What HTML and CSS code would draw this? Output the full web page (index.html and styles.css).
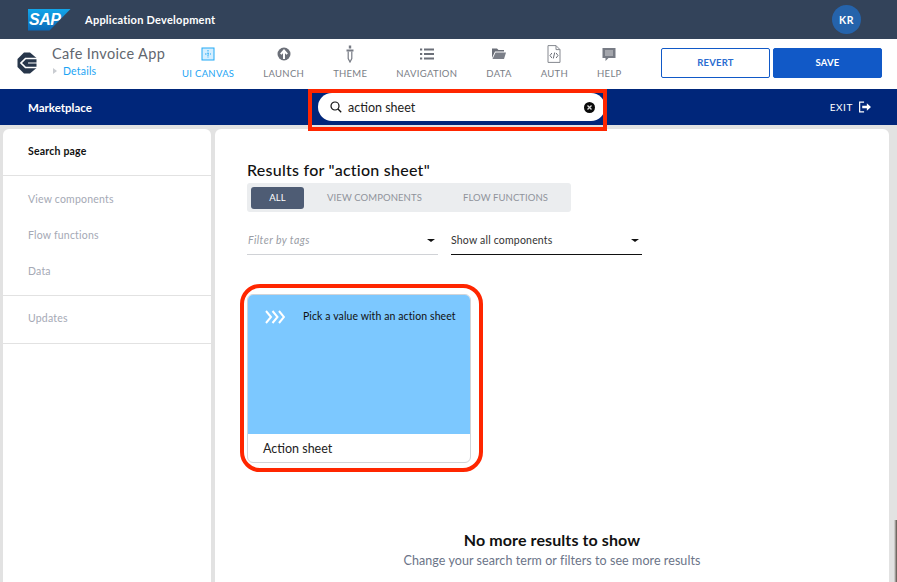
FILE: index.html
```html
<!DOCTYPE html>
<html lang="en">
<head>
<meta charset="utf-8">
<title>Marketplace</title>
<link rel="stylesheet" href="styles.css">
</head>
<body>
<div class="app">
  <header class="topbar">
    <div class="sap-logo"><span>SAP</span></div>
    <div class="topbar-title">Application Development</div>
    <div class="avatar">KR</div>
  </header>

  <div class="toolbar">
    <svg class="app-logo" viewBox="0 0 20 22" aria-hidden="true">
      <path d="M7 .5h6l6.500 5.500v10L13 21.500H7L.5 15V7z" fill="#27364a"/>
      <path d="M20 6.500H8.500L4 11l4.500 4.500H20" fill="none" stroke="#fff" stroke-width="1.700"/>
      <path d="M11 11h9" stroke="#fff" stroke-width="1"/>
    </svg>
    <div class="app-name">
      <div class="app-title">Cafe Invoice App</div>
      <div class="app-details"><i class="tri"></i>Details</div>
    </div>
    <nav class="nav">
      <div class="nav-item active">
        <svg class="nav-icon" viewBox="0 0 14 18" aria-hidden="true"><rect x="1" y="3" width="12" height="12" fill="#d4eeff" stroke="#22a9f5"/><path d="M7 5v8M4 9h6" stroke="#22a9f5" stroke-dasharray="1.500 1"/></svg>
        <span>UI CANVAS</span>
      </div>
      <div class="nav-item">
        <svg class="nav-icon" viewBox="0 0 14 18" aria-hidden="true"><circle cx="7" cy="9" r="6.500" fill="#6b6f78"/><path d="M7 14V7M3.800 9.200 7 5.600l3.200 3.600" fill="none" stroke="#fff" stroke-width="2"/></svg>
        <span>LAUNCH</span>
      </div>
      <div class="nav-item">
        <svg class="nav-icon" viewBox="0 0 14 18" aria-hidden="true"><path d="M7 0.500v3" stroke="#777b84" stroke-width="2.400"/><path d="M3.500 4.500h7v2h-7z" fill="#777b84"/><path d="M5.200 6.500v7L7 17l1.800-3.500v-7" fill="none" stroke="#777b84" stroke-width="1.200"/></svg>
        <span>THEME</span>
      </div>
      <div class="nav-item">
        <svg class="nav-icon" viewBox="0 0 14 18" aria-hidden="true"><path d="M0 4.500h2.200M4 4.500h10M0 9h2.200M4 9h10M0 13.500h2.200M4 13.500h10" stroke="#6b6f78" stroke-width="2"/></svg>
        <span>NAVIGATION</span>
      </div>
      <div class="nav-item">
        <svg class="nav-icon" viewBox="0 0 14 18" aria-hidden="true"><path d="M0 3.500h5l1.500 1.500H12v1.500H3L0 13z" fill="#6b6f78"/><path d="M3.500 7.500H14l-2 6.500H0.500z" fill="#7b7f88"/></svg>
        <span>DATA</span>
      </div>
      <div class="nav-item">
        <svg class="nav-icon" viewBox="0 0 14 18" aria-hidden="true"><path d="M1 .6h8l4 4v12.800H1z" fill="#fff" stroke="#85888f"/><path d="M9 .6v4h4" fill="none" stroke="#85888f"/><path d="M4.900 8 3 10.500 4.900 13M9.100 8l1.900 2.500L9.100 13M7.700 7.500l-1.400 6" fill="none" stroke="#6b6f78"/></svg>
        <span>AUTH</span>
      </div>
      <div class="nav-item">
        <svg class="nav-icon" viewBox="0 0 14 18" aria-hidden="true"><path d="M0.500 3h13v10H6.500l-3 3v-3h-3z" fill="#777b84"/><path d="M3 6h8M3 8h8M3 10h8" stroke="#e8e8ea" stroke-width=".8"/></svg>
        <span>HELP</span>
      </div>
    </nav>
    <div class="actions">
      <button class="btn btn-outline">REVERT</button>
      <button class="btn btn-solid">SAVE</button>
    </div>
  </div>

  <div class="marketbar">
    <div class="market-title">Marketplace</div>
    <div class="search">
      <svg class="search-icon" viewBox="0 0 12 12" aria-hidden="true"><circle cx="5" cy="5" r="4" fill="none" stroke="#111" stroke-width="1.200"/><path d="M8 8l3.200 3.200" stroke="#111" stroke-width="1.300"/></svg>
      <span class="search-text">action sheet</span>
      <svg class="search-clear" viewBox="0 0 11 11" aria-hidden="true"><circle cx="5.500" cy="5.500" r="5.500" fill="#0a0a0a"/><path d="M3.500 3.500l4 4M7.500 3.500l-4 4" stroke="#ddd" stroke-width="1.300"/></svg>
    </div>
    <div class="exit">
      <span>EXIT</span>
      <svg class="exit-icon" viewBox="0 0 13 12" aria-hidden="true"><path d="M5.500 .7H.7v10.600h4.800" fill="none" stroke="#fff" stroke-width="1.300"/><path d="M3.500 4.700h5V2l4.500 4-4.500 4V7.300h-5z" fill="#fff"/></svg>
    </div>
  </div>

  <div class="content">
    <aside class="sidebar">
      <div class="side-group side-head"><div class="side-link current">Search page</div></div>
      <div class="side-group side-mid">
        <div class="side-link">View components</div>
        <div class="side-link">Flow functions</div>
        <div class="side-link">Data</div>
      </div>
      <div class="side-group side-end"><div class="side-link">Updates</div></div>
    </aside>
    <main class="main">
      <h1 class="results-title">Results for "action sheet"</h1>
      <div class="tabs">
        <div class="tab tab-active">ALL</div>
        <div class="tab tab-view">VIEW COMPONENTS</div>
        <div class="tab tab-flow">FLOW FUNCTIONS</div>
      </div>
      <div class="filters">
        <div class="filter filter-tags"><span>Filter by tags</span><i class="caret"></i></div>
        <div class="filter filter-kind"><span>Show all components</span><i class="caret"></i></div>
      </div>
      <div class="card">
        <div class="card-art">
          <svg class="chevrons" viewBox="0 0 20 14" aria-hidden="true"><path d="M1 1l5 6-5 6M7.500 1l5 6-5 6M14 1l5 6-5 6" fill="none" stroke="#fff" stroke-width="2"/></svg>
          <span class="card-desc">Pick a value with an action sheet</span>
        </div>
        <div class="card-name">Action sheet</div>
      </div>
      <div class="no-more">
        <div class="no-more-title">No more results to show</div>
        <div class="no-more-sub">Change your search term or filters to see more results</div>
      </div>
    </main>
  </div>
</div>
<div class="mark mark-search"></div>
<div class="mark mark-card"></div>
<div class="edge"></div>
</body>
</html>
```

FILE: styles.css
```css
* { box-sizing: border-box; }
html, body { margin: 0; height: 100%; overflow: hidden; }
body { font-family: "Lato", "Open Sans", sans-serif; background: #e2e2e2; color: #111; position: relative; }
.app { width: 897px; height: 582px; display: flex; flex-direction: column; overflow: hidden; }

.topbar { height: 39px; flex: none; background: #33435a; display: flex; align-items: center; padding: 0 36px 0 28px; }
.sap-logo { width: 43px; height: 22px; background: linear-gradient(180deg, #12a6ea, #0b67b6); clip-path: polygon(0 0, 100% 0, 50% 100%, 0 100%); display: flex; align-items: center; }
.sap-logo span { color: #fff; font: italic 700 16px/22px "Liberation Sans", sans-serif; letter-spacing: -0.5px; padding-left: 1px; }
.topbar-title { margin-left: 14px; color: #fff; font-size: 11px; font-weight: 700; letter-spacing: 0.25px; flex: 1; }
.avatar { width: 29px; height: 29px; border-radius: 50%; background: #2563ab; color: #fff; font-size: 10.5px; font-weight: 700; letter-spacing: 0.5px; display: flex; align-items: center; justify-content: center; }

.toolbar { height: 50px; flex: none; background: #fff; display: flex; align-items: flex-start; padding: 0 15px 0 17px; }
.app-logo { width: 20px; height: 22px; margin-top: 13px; flex: none; }
.app-name { width: 130px; margin-left: 15px; flex: none; }
.app-title { font-size: 14.5px; line-height: 18px; margin-top: 6px; color: #62676f; letter-spacing: 0.35px; }
.app-details { font-size: 10.5px; line-height: 12px; margin-top: 2px; color: #1ba4f4; display: flex; align-items: center; letter-spacing: 0.2px; }
.tri { width: 0; height: 0; border-left: 4px solid #c9ccd1; border-top: 3.5px solid transparent; border-bottom: 3.5px solid transparent; margin: 0 6px 0 1px; }
.nav { display: flex; gap: 29px; flex: none; padding-top: 6px; }
.nav-item { display: flex; flex-direction: column; align-items: center; color: #7a7e86; font-size: 9.5px; letter-spacing: 0.3px; line-height: 12px; white-space: nowrap; }
.nav-item.active { color: #1ba4f4; }
.nav-icon { width: 14px; height: 18px; margin-bottom: 5px; display: block; }
.actions { display: flex; gap: 3px; margin-top: 9px; margin-left: auto; }
.btn { width: 109px; height: 30px; border-radius: 2px; font: 700 9.5px "Lato", sans-serif; letter-spacing: 0.2px; padding: 0 0 1px; }
.btn-outline { background: #fff; border: 1px solid #1159c7; color: #2a6cd0; }
.btn-solid { background: #1159c7; border: 1px solid #1159c7; color: #fff; }

.marketbar { height: 36px; flex: none; background: #00267a; display: flex; align-items: center; padding: 0 26px 0 28px; position: relative; }
.market-title { color: #fff; font-size: 11.5px; font-weight: 700; width: 290px; }
.search { width: 287px; height: 28px; border-radius: 14px; background: #fff; display: flex; align-items: center; padding: 0 10px 0 12px; }
.search-icon { width: 12px; height: 12px; flex: none; }
.search-text { margin-left: 6px; flex: 1; font-size: 12.5px; color: #222; }
.search-clear { width: 11px; height: 11px; flex: none; }
.exit { margin-left: auto; display: flex; align-items: center; gap: 6px; color: #fff; font-size: 10px; letter-spacing: 0.6px; }
.exit-icon { width: 12px; height: 12px; }

.content { flex: 1; min-height: 0; display: flex; gap: 4px; padding: 4px 8px 0 3px; }
.sidebar { width: 208px; flex: none; background: #fff; border-radius: 6px 6px 0 0; }
.side-group { border-bottom: 1px solid #e2e2e2; padding: 0 25px; }
.side-head { height: 47px; padding-top: 15px; }
.side-mid { height: 120px; padding-top: 16px; display: flex; flex-direction: column; gap: 22px; }
.side-end { height: 48px; padding-top: 15px; }
.side-link { font-size: 10.5px; line-height: 14px; color: #a5a9b5; letter-spacing: 0.2px; }
.side-link.current { color: #111; font-weight: 700; }

.main { flex: 1; background: #fff; border-radius: 6px 6px 0 0; padding: 31px 0 0 32px; display: flex; flex-direction: column; align-items: flex-start; }
.results-title { margin: 0; font-size: 16px; line-height: 20px; font-weight: 500; color: #111; letter-spacing: 0.25px; }
.tabs { width: 324px; height: 29px; margin-top: 3px; background: #ebedef; border-radius: 3px; display: flex; align-items: center; padding: 0 4px; color: #8f939b; font-size: 9.5px; letter-spacing: 0.1px; white-space: nowrap; }
.tab-active { width: 53px; height: 22px; background: #4e5c74; color: #fff; border-radius: 3px; display: flex; align-items: center; justify-content: center; flex: none; }
.tab-view { margin-left: 23px; }
.tab-flow { margin-left: 41px; }
.filters { display: flex; gap: 13px; margin-top: 15px; }
.filter { width: 191px; height: 28px; display: flex; align-items: center; justify-content: space-between; padding: 0 3px 1px 1px; font-size: 10.5px; border-bottom: 1px solid #d0d2d6; letter-spacing: 0.2px; }
.filter-tags { color: #999da5; font-style: italic; letter-spacing: 0.45px; }
.filter-kind { color: #333; border-bottom-color: #111; padding-left: 0; }
.caret { width: 0; height: 0; border-top: 3.5px solid #111; border-left: 4px solid transparent; border-right: 4px solid transparent; }
.card { width: 224px; height: 169px; margin-top: 39px; border: 1px solid #d2d4d8; border-radius: 6px; overflow: hidden; background: #fff; }
.card-art { height: 139px; background: #7cc8ff; display: flex; align-items: flex-start; padding: 14px 14px 0 17px; }
.chevrons { width: 20px; height: 14px; flex: none; margin-top: 1px; }
.card-desc { margin-left: 18px; font-size: 10.5px; line-height: 14px; color: #111; white-space: nowrap; letter-spacing: 0.1px; }
.card-name { padding: 7px 0 0 15px; font-size: 12.5px; line-height: 16px; color: #222; }
.no-more { width: 610px; margin-top: 68px; text-align: center; }
.no-more-title { font-size: 16px; line-height: 18px; font-weight: 700; color: #111; letter-spacing: 0.1px; }
.no-more-sub { font-size: 12.5px; line-height: 16px; margin-top: 4px; color: #6b7488; letter-spacing: 0.07px; }

.mark { position: absolute; border: 4px solid #ff2600; pointer-events: none; }
.mark-search { left: 308px; top: 89px; width: 299px; height: 42px; }
.mark-card { left: 240px; top: 284px; width: 243px; height: 188px; border-radius: 20px; }
.edge { position: absolute; right: 0; top: 520px; bottom: 0; width: 3px; background: linear-gradient(90deg, #e2e2e2, #5a5048); }
```
